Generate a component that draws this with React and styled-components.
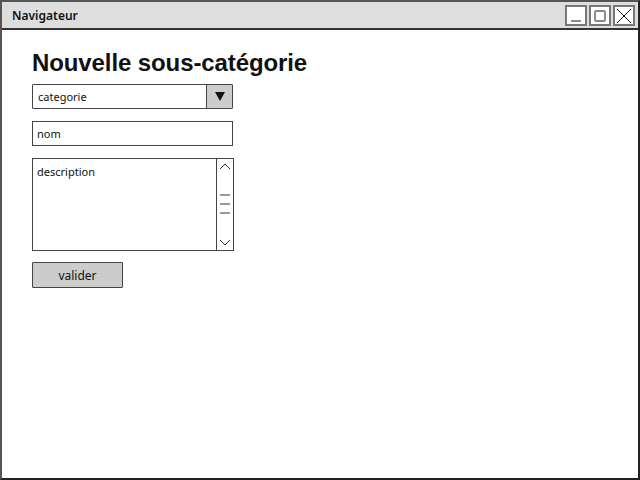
import React from "react";
import styled, { createGlobalStyle } from "styled-components";

const Global = createGlobalStyle`
  html, body { margin: 0; padding: 0; background: #fff; }
  * { box-sizing: border-box; }
`;

const Window = styled.div`
  width: 640px;
  height: 480px;
  border: 2px solid #555;
  border-right-color: #222;
  border-bottom-color: #222;
  display: flex;
  flex-direction: column;
  background: #fff;
`;

const TitleBar = styled.div`
  height: 28px;
  background: #dedede;
  border-bottom: 2px solid #333;
  display: flex;
  align-items: center;
  padding: 0 3px 0 10px;
`;

const Title = styled.div`
  flex: 1;
  font-family: "Noto Sans", sans-serif;
  font-size: 12px;
  font-weight: 600;
  color: #111;
`;

const WinButtons = styled.div`
  display: flex;
  gap: 2px;
  margin-top: 1px;
`;

const WinButton = styled.div`
  width: 22px;
  height: 21px;
  border: 2px solid #777;
  background: #fff;
  display: flex;
  align-items: center;
  justify-content: center;
`;

const Content = styled.div`
  padding: 19px 30px;
  display: flex;
  flex-direction: column;
  align-items: flex-start;
`;

const Heading = styled.h1`
  margin: 0 0 7px 0;
  font-family: "Liberation Sans", Arial, sans-serif;
  font-weight: bold;
  font-size: 24px;
  letter-spacing: -0.1px;
  line-height: 28px;
  color: #111;
`;

const fieldFont = `
  font-family: "Noto Sans", sans-serif;
  font-size: 11px;
  color: #111;
`;

const Select = styled.div`
  width: 201px;
  height: 25px;
  border: 1.5px solid #444;
  border-radius: 1px;
  display: flex;
  align-items: stretch;
  margin-bottom: 12px;
`;

const SelectText = styled.div`
  ${fieldFont}
  flex: 1;
  display: flex;
  align-items: center;
  padding-left: 5px;
`;

const SelectArrow = styled.div`
  width: 26px;
  background: #cccccc;
  border-left: 1.5px solid #444;
  display: flex;
  align-items: center;
  justify-content: center;
`;

const Input = styled.div`
  ${fieldFont}
  width: 201px;
  height: 25px;
  border: 1.5px solid #444;
  display: flex;
  align-items: center;
  padding-left: 4px;
  margin-bottom: 12px;
`;

const TextArea = styled.div`
  width: 202px;
  height: 93px;
  border: 1.5px solid #444;
  display: flex;
  margin-bottom: 11px;
`;

const AreaText = styled.div`
  ${fieldFont}
  flex: 1;
  padding: 5px 4px;
  line-height: 16px;
`;

const ScrollBar = styled.div`
  width: 17px;
  border-left: 1.5px solid #444;
  display: flex;
  flex-direction: column;
  align-items: center;
  justify-content: space-between;
  padding: 3px 0;
`;

const Button = styled.div`
  ${fieldFont}
  font-size: 12px;
  width: 91px;
  height: 26px;
  background: #cccccc;
  border: 1.5px solid #444;
  border-radius: 1px;
  display: flex;
  align-items: center;
  justify-content: center;
`;

export default function App() {
  return (
    <>
      <Global />
      <Window>
        <TitleBar>
          <Title>Navigateur</Title>
          <WinButtons>
            <WinButton>
              <svg width="14" height="14" viewBox="0 0 14 14">
                <line x1="2" y1="12" x2="12" y2="12" stroke="#666" strokeWidth="1.5" />
              </svg>
            </WinButton>
            <WinButton>
              <svg width="14" height="14" viewBox="0 0 14 14">
                <rect x="2" y="2" width="10" height="10" rx="1" fill="none" stroke="#666" strokeWidth="1.5" />
              </svg>
            </WinButton>
            <WinButton>
              <svg width="16" height="16" viewBox="0 0 16 16">
                <path d="M1 1 L15 15 M15 1 L1 15" stroke="#111" strokeWidth="1" />
              </svg>
            </WinButton>
          </WinButtons>
        </TitleBar>
        <Content>
          <Heading>Nouvelle sous-catégorie</Heading>
          <Select>
            <SelectText>categorie</SelectText>
            <SelectArrow>
              <svg width="10" height="9" viewBox="0 0 10 9">
                <path d="M0 0 L10 0 L5 9 Z" fill="#111" />
              </svg>
            </SelectArrow>
          </Select>
          <Input>nom</Input>
          <TextArea>
            <AreaText>description</AreaText>
            <ScrollBar>
              <svg width="12" height="8" viewBox="0 0 12 8">
                <path d="M1 7 L6 2 L11 7" fill="none" stroke="#333" strokeWidth="1" />
              </svg>
              <svg width="12" height="24" viewBox="0 0 12 24">
                <path d="M1 2 H11 M1 11 H11 M1 20 H11" stroke="#333" strokeWidth="1" />
              </svg>
              <svg width="12" height="8" viewBox="0 0 12 8">
                <path d="M1 1 L6 6 L11 1" fill="none" stroke="#333" strokeWidth="1" />
              </svg>
            </ScrollBar>
          </TextArea>
          <Button>valider</Button>
        </Content>
      </Window>
    </>
  );
}
